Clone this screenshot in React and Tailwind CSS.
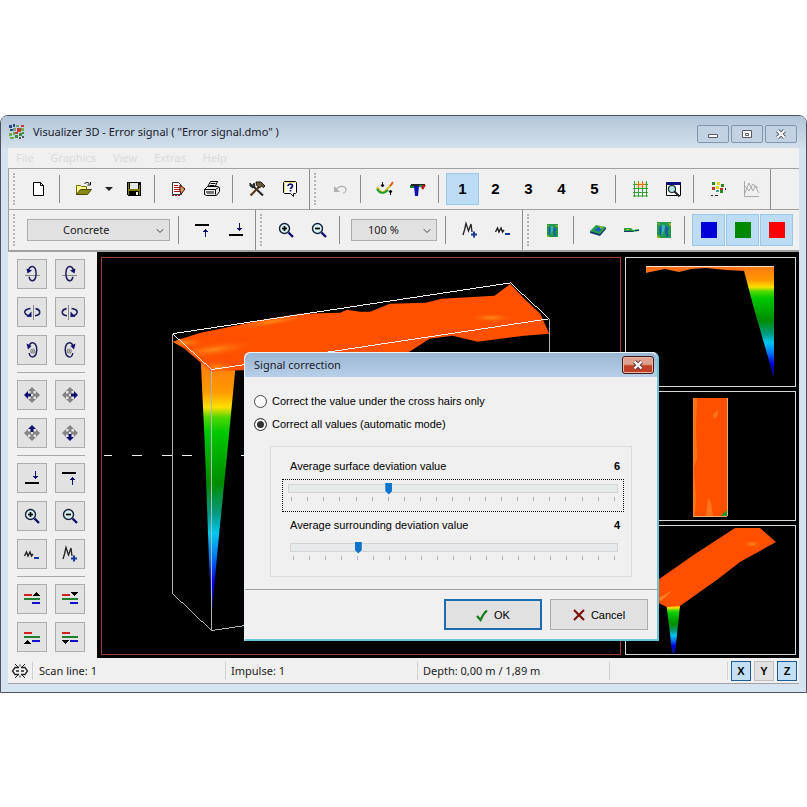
import { useState } from "react";
import { ChevronDown } from "lucide-react";

const NAVY = "#10106e";

function Svg({ w = 18, h = 18, crisp, children }) {
  return (
    <svg
      width={w}
      height={h}
      viewBox={`0 0 ${w} ${h}`}
      fill="none"
      shapeRendering={crisp ? "crispEdges" : "auto"}
      aria-hidden="true"
    >
      {children}
    </svg>
  );
}

/* ---------- toolbar icons ---------- */

const LogoIcon = () => (
  <Svg w={16} h={16} crisp>
    <path fill="#2b4a86" d="M0 1h3v3H0zM4 0h2v3H4zM1 5h3v2H1z" />
    <path fill="#7a9a7a" d="M7 1h3v2H7zM4 4h3v3H4z" />
    <path fill="#c23b2e" d="M8 4h4v4H8zM12 1h3v2h-3zM6 8h3v2H6z" />
    <path fill="#6fae4a" d="M12 4h3v3h-3zM0 9h3v3H0zM4 8h2v3H4zM1 13h4v2H1z" />
    <path fill="#3c8a3c" d="M10 9h3v3h-3zM6 11h3v3H6zM13 8h2v2h-2z" />
    <path fill="#555" d="M13 12h2v2h-2zM10 13h2v2h-2z" />
  </Svg>
);

const NewIcon = () => (
  <Svg>
    <path d="M3.500 2.500h7l3 3v10h-10z" fill="#fff" stroke="#000" />
    <path d="M10.500 2.500v3h3" stroke="#000" />
  </Svg>
);

const OpenIcon = () => (
  <Svg>
    <path d="M1.500 14.500v-9h4l1 1h5v3" fill="#ffff9a" stroke="#6b6b00" />
    <path d="M1.500 14.500l4-5h11l-4 5z" fill="#8a8a10" stroke="#4a4a00" />
    <path d="M9.500 4c1-2 4-2 5 0M15.500 2v3h-3" stroke="#000" />
  </Svg>
);

const SaveIcon = () => (
  <Svg crisp>
    <path d="M2 2h14v14H3l-1-1z" fill="#000" />
    <path d="M3 3h1v12H3zM14 5h1v10h-1z" fill="#7c7c00" />
    <path d="M5 3h8v6H5z" fill="#e4e4e4" />
    <path d="M3 9h12v2H3z" fill="#7c7c00" />
    <path d="M5 11h8v5H5z" fill="#000" />
    <path d="M11 12h2v3h-2z" fill="#fff" />
  </Svg>
);

const ReportIcon = () => (
  <Svg>
    <path d="M2.500 2.500h6l3 3v9h-9z" fill="#fff" stroke="#333" />
    <path d="M4 5.500h4M4 7.500h6M4 9.500h6M4 11.500h6" stroke="#b01818" />
    <path d="M2 15.500h8" stroke="#b01818" strokeDasharray="2 1" />
    <path d="M10 5l5 4-4 5-1-3z" fill="#d4a060" stroke="#400" />
  </Svg>
);

const PrintIcon = () => (
  <Svg>
    <path d="M4.500 7l3-5.500h7L12 7z" fill="#fff" stroke="#000" />
    <path d="M7.500 3.500h5M6.500 5.500h5" stroke="#000" />
    <path d="M1.500 9.500l3-3h10l2 1v4l-3 4h-10l-2-1z" fill="#ececec" stroke="#000" />
    <path d="M1.500 9.500h11l3-2M12.500 9.500v5M3 12h8" stroke="#000" />
    <path d="M4 13.500h7" stroke="#777" />
  </Svg>
);

const ToolsIcon = () => (
  <Svg>
    <path d="M5.500 6.500l9.500 9" stroke="#222" strokeWidth="2" />
    <path d="M12 6l-9.500 9.500" stroke="#5a3a1a" strokeWidth="2.200" />
    <path d="M8 2h5l4 4-1.500 1.500-2-1.500-2 2-3-3z" fill="#6a5a3a" stroke="#111" />
    <path d="M2 3v3l3 2 2-2-1-3-1 2H3.500z" fill="#333" stroke="#222" />
  </Svg>
);

const HelpIcon = () => (
  <Svg>
    <path d="M3.500 1.500h11l1 1v10l-1 1h-2v3l-3-3h-6l-1-1v-10z" fill="#fff" stroke="#000" />
    <path d="M4 2.500h10M3.500 3v9" stroke="#f3e36a" />
    <path d="M7 6c0-2.500 4.500-2.500 4.500 0 0 1.500-2 1.500-2 3M9.500 10v1.500" stroke="#10106e" strokeWidth="1.700" />
  </Svg>
);

const UndoIcon = () => (
  <Svg>
    <path d="M5 9.500c3-4 9-4 10-.5.5 2-1 4-3 4" stroke="#b0b0b0" strokeWidth="1.200" />
    <path d="M3 6v6h6z" fill="#b0b0b0" />
  </Svg>
);

const CorrectIcon = () => (
  <Svg w={20}>
    <path d="M2 7c3 6 7 7 10 2l6-6" stroke="#d8c020" strokeWidth="2" />
    <path d="M2 9c3 5 7 5 11 1" stroke="#1e9a2a" strokeWidth="2" />
    <path d="M15 6l3-4" stroke="#e05020" strokeWidth="1.500" />
    <path d="M7.500 2v4M6 5l1.500 2L9 5zM15.500 15v-4M14 12l1.500-2 1.500 2z" stroke="#000" fill="#000" />
  </Svg>
);

const SignalIcon = () => (
  <Svg>
    <path d="M1 5h5v3H1z" fill="#157a3a" />
    <path d="M2 4h14v2H2z" fill="#222" />
    <path d="M5 6h5l-1 10H6z" fill="#1010b0" />
    <path d="M10 5h7l-3 5z" fill="#c01818" />
    <path d="M10 5h3v2h-3z" fill="#1b9b3c" />
  </Svg>
);

const GridIcon = () => (
  <Svg>
    <path d="M5 2h10v6H5z" fill="#ffe0b0" />
    <path d="M2 4.500h15M2 8.500h15M2 12.500h15M2 16h15M3.500 1v16M7.500 1v16M11.500 1v16M15.500 1v16" stroke="#35a035" />
    <path d="M6 4.500h8M7.500 2v5M11.500 2v5" stroke="#f07020" />
  </Svg>
);

const PreviewIcon = () => (
  <Svg>
    <path d="M2.500 3.500h14v12h-14z" fill="#fff" stroke="#000" />
    <path d="M2 2h15v3H2z" fill="#10107a" />
    <circle cx="8" cy="9" r="3.500" fill="#aee6e6" stroke="#222" strokeWidth="1.200" />
    <path d="M10.500 11.500l5 5" stroke="#222" strokeWidth="2" />
  </Svg>
);

const PointsIcon = () => (
  <Svg crisp>
    <path fill="#2a8a20" d="M3 2h3v3H3zM12 4h3v3h-3zM11 10h3v3h-3z" />
    <path fill="#e0d020" d="M8 2h3v3H8zM7 6h3v3H7z" />
    <path fill="#c03020" d="M3 7h3v3H3zM11 8h3v2h-3z" />
    <path fill="#40a0a0" d="M7 10h3v2H7z" />
    <path fill="#222" d="M2 15h2v1H2zM6 15h3v1H6zM16 8h1v2h-1z" />
  </Svg>
);

const CurveIcon = () => (
  <Svg>
    <path d="M2.500 1v15.500H17" stroke="#aaa" />
    <path d="M3 13l4-10 4 8 2-5 4 7M3 6l4 5 4-7 5 4" stroke="#aaa" />
  </Svg>
);

const LineUpIcon = () => (
  <Svg crisp>
    <path d="M1 3h14v2H1z" fill="#000" />
    <path d="M11 8h1v8h-1zM10 9h3v1h-3zM9 10h5v1H9z" fill={NAVY} />
  </Svg>
);

const LineDownIcon = () => (
  <Svg crisp>
    <path d="M2 13h14v2H2z" fill="#000" />
    <path d="M12 2h1v8h-1zM11 8h3v1h-3zM10 7h5v1h-5z" fill={NAVY} />
  </Svg>
);

const ZoomIcon = ({ plus }) => (
  <Svg>
    <circle cx="7.500" cy="7.500" r="5" fill="#d6f0ee" stroke="#16203a" strokeWidth="1.400" />
    <path d="M5 7.500h5" stroke="#000" strokeWidth="1.700" />
    {plus && <path d="M7.500 5v5" stroke="#000" strokeWidth="1.700" />}
    <path d="M11.500 11.500l4.500 4.500" stroke={NAVY} strokeWidth="2.400" />
  </Svg>
);

const AmpUpIcon = () => (
  <Svg>
    <path d="M2 14l1.500-5L5 2.500 7.500 10l2.500-7 1 8" stroke="#222" strokeWidth="1.300" />
    <path d="M10 13.500h6M13 10.500v6" stroke="#1a3a9a" strokeWidth="2" />
  </Svg>
);

const AmpDownIcon = () => (
  <Svg>
    <path d="M1.500 11l2-4 1.500 4 2-4 1.500 4 1.500-2" stroke="#222" strokeWidth="1.400" />
    <path d="M11 13h5" stroke="#1a3a9a" strokeWidth="2" />
  </Svg>
);

const MapIcon = ({ size = 12 }) => (
  <svg width={size} height={size + 2} viewBox="0 0 12 14" preserveAspectRatio="none" aria-hidden="true">
    <path d="M0 0h12v14H0z" fill="#1f9a4a" />
    <path d="M2 5l2-3 1 4-2 6-1-2zM7 3l3 2-1 4 1 4H8L7 8z" fill="#1a5ab0" />
    <path d="M4 2l3 1-1 5-2 4z" fill="#38b8a8" />
    <path d="M9 1h3v3zM0 11l3 3H0zM0 1h2v2z" fill="#b0b020" />
  </svg>
);

const SurfaceIcon = () => (
  <Svg>
    <path d="M1 10l6-6 10 2-6 8z" fill="#2aa040" />
    <path d="M1 10l10 3v2L1 12zM11 13l6-7v2l-6 7z" fill="#123a70" />
    <path d="M5 9l4-3 4 1-3 4z" fill="#1a60c0" />
    <path d="M10 5l4 1-2 2z" fill="#b0c020" />
  </Svg>
);

const SideIcon = () => (
  <Svg>
    <path d="M2 7h7l2 2 6-1v2l-6 1H2z" fill="#2aa040" />
    <path d="M2 10h9v1H2zM13 9h4v1h-4z" fill="#123a70" />
    <path d="M4 8h3v1H4z" fill="#b0c020" />
  </Svg>
);

/* ---------- side panel icons ---------- */

const RotateXIcon = ({ mirror }) => (
  <svg width="20" height="20" viewBox="0 0 20 20" fill="none" className={mirror ? "-scale-x-100" : ""} aria-hidden="true">
    <path d="M3 11.500h15" stroke="#888" />
    <path d="M6.500 6C8 1.500 12.500 1 13.800 6.500c1 4.500-.3 10-3.300 10.300-2 .2-3-2-3.500-4" stroke="#20205e" strokeWidth="1.500" />
    <path d="M4.500 4.500L10 6.500l-4.500 3z" fill={NAVY} />
  </svg>
);

const RotateYIcon = ({ mirror }) => (
  <svg width="20" height="20" viewBox="0 0 20 20" fill="none" className={mirror ? "-scale-x-100" : ""} aria-hidden="true">
    <path d="M11.500 3v15" stroke="#888" />
    <path d="M8.500 6.500C5 6.800 2.500 8.300 2.800 10.500c.2 1.500 1.500 2.300 3.200 3M13 13.800c3-.5 5-2 4.700-4-.3-1.800-2-2.800-4.200-3.200" stroke="#20205e" strokeWidth="1.600" />
    <path d="M4.500 14.800L9.500 15V9.500z" fill={NAVY} />
  </svg>
);

const RotateZIcon = ({ mirror }) => (
  <svg width="20" height="20" viewBox="0 0 20 20" fill="none" className={mirror ? "-scale-x-100" : ""} aria-hidden="true">
    <path d="M7 6C8.500 1.500 13 1.500 14.500 7c1 4.500-.5 9.800-3.800 10-2 .1-3.200-2-3.500-4" stroke="#20205e" strokeWidth="1.500" />
    <path d="M4.500 3.500L9.500 6 6 9.500z" fill={NAVY} />
    <circle cx="10.800" cy="11" r="2" stroke="#888" strokeWidth="1.200" />
    <circle cx="10.800" cy="11" r="0.800" fill="#444" />
  </svg>
);

const arrows = {
  left: "M2 10l4-4v2.500h3v3H6V14z",
  right: "M18 10l-4-4v2.500h-3v3h3V14z",
  up: "M10 2l4 4h-2.500v3h-3V6H6z",
  down: "M10 18l4-4h-2.500v-3h-3v3H6z",
};

const MoveIcon = ({ dir }) => (
  <Svg w={20} h={20}>
    {Object.keys(arrows).map((key) => (
      <path key={key} d={arrows[key]} fill={key === dir ? NAVY : "#848484"} />
    ))}
  </Svg>
);

const LayerIcon = ({ arrow }) => (
  <Svg w={20} h={18} crisp>
    <path d="M2 4h8v2H2z" fill="#d02020" />
    <path d="M2 8h16v2H2z" fill="#208030" />
    <path d="M10 12h8v2h-8z" fill="#1010d0" />
    <path d={arrow} fill="#000" />
  </Svg>
);

const LinkIcon = () => (
  <Svg>
    <path d="M8 5.500H4L1.500 9 4 12.500h4M10 5.500h4L16.500 9 14 12.500h-4M5 9h3M10 9h3" stroke="#222" strokeWidth="1.300" />
    <path d="M4 2l3 3M9 2.500v2M14 2l-3 3M4 16l3-3M9 15.500v-2M14 16l-3-3" stroke="#222" />
  </Svg>
);

/* ---------- toolbar parts ---------- */

function Tool({ label, active, children }) {
  return (
    <button
      aria-label={label}
      className={
        active
          ? "flex h-8 w-[33px] shrink-0 items-center justify-center border border-[#9cc8e8] bg-[#bcdcf4]"
          : "flex h-8 w-[33px] shrink-0 items-center justify-center"
      }
    >
      {children}
    </button>
  );
}

const Divider = () => <span className="ml-1 mr-[7px] h-7 w-px shrink-0 bg-[#8c8c8c]" />;

function Group({ last, children }) {
  return (
    <div
      className={
        last
          ? "flex h-full min-w-0 flex-1 items-center"
          : "flex h-full shrink-0 items-center border-r border-[#8c8c8c] pr-[3px]"
      }
    >
      <span className="ml-1 mr-[6px] h-8 w-[3px] shrink-0 border-l-2 border-dotted border-[#b4b4b4]" />
      {children}
    </div>
  );
}

function Combo({ label, value, className, selectClass }) {
  return (
    <span className={`relative block h-[22px] shrink-0 ${className}`}>
      <select
        aria-label={label}
        className={`block h-full w-full appearance-none border border-[#adadad] bg-[#e1e1e1] text-[11px] leading-4 text-[#222] ${selectClass}`}
      >
        <option>{value}</option>
      </select>
      <ChevronDown className="pointer-events-none absolute right-1 top-[6px] size-3 text-[#444]" strokeWidth={2} />
    </span>
  );
}

function SideButton({ label, children }) {
  return (
    <button aria-label={label} className="flex size-[30px] items-center justify-center border border-[#adadad] bg-[#e2e2e2]">
      {children}
    </button>
  );
}

const SideGroup = ({ children }) => <div className="grid grid-cols-[30px_30px] gap-2">{children}</div>;

const SideRule = () => <hr className="my-[7px] mr-3 border-t border-[#a8a8a8]" />;

function Toolbars() {
  return (
    <div className="border-t border-l border-[#a0a0a0]">
      <div className="flex h-[41px] items-center border-b border-[#a0a0a0]">
        <Group>
          <Tool label="New"><NewIcon /></Tool>
          <Divider />
          <Tool label="Open"><OpenIcon /></Tool>
          <button aria-label="Recent files" className="flex h-8 w-[17px] items-center justify-center">
            <Svg w={8} h={5}><path d="M0 0h8L4 4z" fill="#222" /></Svg>
          </button>
          <Tool label="Save"><SaveIcon /></Tool>
          <Divider />
          <Tool label="Report"><ReportIcon /></Tool>
          <Tool label="Print"><PrintIcon /></Tool>
          <Divider />
          <Tool label="Settings"><ToolsIcon /></Tool>
          <Tool label="Help"><HelpIcon /></Tool>
        </Group>
        <Group>
          <Tool label="Undo"><UndoIcon /></Tool>
          <Divider />
          <Tool label="Correct signal"><CorrectIcon /></Tool>
          <Tool label="Error signal"><SignalIcon /></Tool>
          <Divider />
          <div className="flex font-['Liberation_Sans',sans-serif] text-[15px] font-bold text-black">
            <Tool active>1</Tool>
            <Tool>2</Tool>
            <Tool>3</Tool>
            <Tool>4</Tool>
            <Tool>5</Tool>
          </div>
          <Divider />
          <Tool label="Grid"><GridIcon /></Tool>
          <Tool label="Preview"><PreviewIcon /></Tool>
          <Divider />
          <Tool label="Points"><PointsIcon /></Tool>
          <Tool label="Curves"><CurveIcon /></Tool>
        </Group>
      </div>
      <div className="flex h-[42px] items-center border-b-2 border-[#a0a0a0]">
        <Group>
          <Combo label="Soil type" value="Concrete" className="ml-[5px] mr-1 w-[143px]" selectClass="pl-[35px]" />
          <Divider />
          <Tool label="Raise surface"><LineUpIcon /></Tool>
          <Tool label="Lower surface"><LineDownIcon /></Tool>
        </Group>
        <Group>
          <Tool label="Zoom in"><ZoomIcon plus /></Tool>
          <Tool label="Zoom out"><ZoomIcon /></Tool>
          <Divider />
          <Combo label="Zoom" value="100 %" className="ml-1 mr-1 w-[86px]" selectClass="pl-4" />
          <Divider />
          <Tool label="Increase amplitude"><AmpUpIcon /></Tool>
          <Tool label="Decrease amplitude"><AmpDownIcon /></Tool>
        </Group>
        <Group last>
          <Tool label="Top view"><MapIcon size={11} /></Tool>
          <Divider />
          <Tool label="Perspective"><SurfaceIcon /></Tool>
          <Tool label="Side view"><SideIcon /></Tool>
          <Tool label="Map view"><MapIcon size={14} /></Tool>
          <Divider />
          <div className="flex gap-px">
            <Tool label="Blue" active><span className="size-4 bg-[#0000d8]" /></Tool>
            <Tool label="Green" active><span className="size-4 bg-[#008800]" /></Tool>
            <Tool label="Red" active><span className="size-4 bg-[#ff0000]" /></Tool>
          </div>
        </Group>
      </div>
    </div>
  );
}

function SidePanel() {
  return (
    <div className="w-[89px] shrink-0 pb-[5px] pl-[9px] pt-[7px]">
      <SideGroup>
        <SideButton label="Rotate X left"><RotateXIcon /></SideButton>
        <SideButton label="Rotate X right"><RotateXIcon mirror /></SideButton>
        <SideButton label="Rotate Y left"><RotateYIcon /></SideButton>
        <SideButton label="Rotate Y right"><RotateYIcon mirror /></SideButton>
        <SideButton label="Rotate Z left"><RotateZIcon /></SideButton>
        <SideButton label="Rotate Z right"><RotateZIcon mirror /></SideButton>
      </SideGroup>
      <SideRule />
      <SideGroup>
        <SideButton label="Move left"><MoveIcon dir="left" /></SideButton>
        <SideButton label="Move right"><MoveIcon dir="right" /></SideButton>
        <SideButton label="Move up"><MoveIcon dir="up" /></SideButton>
        <SideButton label="Move down"><MoveIcon dir="down" /></SideButton>
      </SideGroup>
      <SideRule />
      <SideGroup>
        <SideButton label="Lower surface"><LineDownIcon /></SideButton>
        <SideButton label="Raise surface"><LineUpIcon /></SideButton>
        <SideButton label="Zoom in"><ZoomIcon plus /></SideButton>
        <SideButton label="Zoom out"><ZoomIcon /></SideButton>
        <SideButton label="Decrease amplitude"><AmpDownIcon /></SideButton>
        <SideButton label="Increase amplitude"><AmpUpIcon /></SideButton>
      </SideGroup>
      <SideRule />
      <SideGroup>
        <SideButton label="Red layer up"><LayerIcon arrow="M14 2h1v1h1v1h1v1h1v1h-7V5h1V4h1V3h1z" /></SideButton>
        <SideButton label="Red layer down"><LayerIcon arrow="M11 2h7v1h-1v1h-1v1h-1v1h-1V5h-1V4h-1V3h-1z" /></SideButton>
        <SideButton label="Blue layer up"><LayerIcon arrow="M5 12h1v1h1v1h1v1h1v1H2v-1h1v-1h1v-1h1z" /></SideButton>
        <SideButton label="Blue layer down"><LayerIcon arrow="M2 12h7v1H8v1H7v1H6v1H5v-1H4v-1H3v-1H2z" /></SideButton>
      </SideGroup>
    </div>
  );
}

/* ---------- 3D views ---------- */

function DepthGradient({ id, y1, y2 }) {
  return (
    <linearGradient id={id} gradientUnits="userSpaceOnUse" x1="0" x2="0" y1={y1} y2={y2}>
      <stop offset="0" stopColor="#ff7a10" />
      <stop offset="0.12" stopColor="#ff9a00" />
      <stop offset="0.18" stopColor="#ffe000" />
      <stop offset="0.22" stopColor="#50d800" />
      <stop offset="0.28" stopColor="#00c800" />
      <stop offset="0.48" stopColor="#008c00" />
      <stop offset="0.6" stopColor="#009a80" />
      <stop offset="0.68" stopColor="#00c8f0" />
      <stop offset="0.78" stopColor="#0070f0" />
      <stop offset="0.87" stopColor="#0000e0" />
      <stop offset="1" stopColor="#101080" />
    </linearGradient>
  );
}

const SURFACE =
  "M71 84l9-3 19-6 25-5 37-8 38-6 40-1 7-3 13 2h10l20-8 36-1 16-4 53-3 16-12 14 15 16 15 9 20-25 2-47 6-25-6-23 3-22 14-28 13-146 5-24 1-10-9-16-14z";

function MainView() {
  return (
    <svg viewBox="0 0 520 397" preserveAspectRatio="xMinYMin meet" className="h-full w-full" aria-label="3D view">
      <defs>
        <DepthGradient id="depthMain" y1="104" y2="358" />
        <radialGradient id="glow">
          <stop offset="0" stopColor="#ff8c18" />
          <stop offset="1" stopColor="#ff5000" stopOpacity="0" />
        </radialGradient>
        <clipPath id="surfaceClip"><path d={SURFACE} /></clipPath>
      </defs>
      <path d="M99 100l35 10-8 83-9 90-7 75-3-66-4-109z" fill="url(#depthMain)" />
      <path d={SURFACE} fill="#ff5000" />
      <g clipPath="url(#surfaceClip)" fill="url(#glow)">
        <ellipse cx="112" cy="92" rx="46" ry="8" transform="rotate(-8 112 92)" />
        <ellipse cx="82" cy="85" rx="26" ry="6" />
        <ellipse cx="170" cy="64" rx="44" ry="5" transform="rotate(-9 170 64)" />
        <ellipse cx="391" cy="60" rx="24" ry="5" />
        <ellipse cx="116" cy="110" rx="22" ry="8" />
      </g>
      <g fill="none" stroke="#f4f4f4" shapeRendering="crispEdges">
        <path d="M71 76v261l39 37 339-51V61M110 112v262" stroke="#b4b4b4" />
        <path d="M71 76L410 25l39 36-339 51z" />
        <path d="M2 198.500h8M30 198.500h10M60 198.500h10M80 198.500h10M140 198.500h8" />
      </g>
    </svg>
  );
}

function ProfileView() {
  return (
    <svg viewBox="0 0 169 128" className="h-full w-full" aria-label="Side view">
      <defs><DepthGradient id="depthSide" y1="9" y2="120" /></defs>
      <path d="M20 8h100v5l-20-1-20-2-15 1-12 3-14-3-15 3-4 1z" fill="#ff7018" />
      <path d="M117 9h31v111L127 47z" fill="url(#depthSide)" />
      <path d="M20 8.500h128" stroke="#ffe0c8" />
    </svg>
  );
}

function TopView() {
  return (
    <svg viewBox="0 0 169 128" className="h-full w-full" aria-label="Top view">
      <path d="M67 6h34v118H67z" fill="#ff5000" />
      <path d="M67 6h4l-1 30 1 30-3 10 2 30-1 18h-2zM87 22l5-4v5l-4 4zM82 106l3 4 2 14h-7z" fill="#ff7418" />
      <path d="M95 124l6-6v6z" fill="#209a30" />
      <path d="M67 124.500h34M101.500 6v118" stroke="#e8b070" />
    </svg>
  );
}

function PerspectiveView() {
  return (
    <svg viewBox="0 0 169 128" className="h-full w-full" aria-label="Perspective view">
      <defs>
        <DepthGradient id="depthPersp" y1="72" y2="127" />
        <radialGradient id="glowPersp">
          <stop offset="0" stopColor="#ff8c18" />
          <stop offset="1" stopColor="#ff5000" stopOpacity="0" />
        </radialGradient>
      </defs>
      <path d="M40 76l14 4-4 38-1 9h-3l-2-20z" fill="url(#depthPersp)" />
      <path d="M109 2h25l16 14-36 20-22 17-38 27-13 1-15-7V58l43-30z" fill="#ff5000" />
      <ellipse cx="126" cy="18" rx="10" ry="4" fill="url(#glowPersp)" />
      <path d="M33 72l14-8-12 11z" fill="#ff8420" />
    </svg>
  );
}

function Views() {
  return (
    <div className="flex min-w-0 flex-1 gap-1 bg-black pb-[3px] pl-1 pr-[3px] pt-[5px]">
      <div className="min-w-0 flex-1 border border-[#a03c34]">
        <MainView />
      </div>
      <div className="flex w-[171px] shrink-0 flex-col gap-1">
        <div className="min-h-0 flex-1 border border-[#d8d8d8]"><ProfileView /></div>
        <div className="min-h-0 flex-1 border border-[#d8d8d8]"><TopView /></div>
        <div className="min-h-0 flex-1 border border-[#d8d8d8]"><PerspectiveView /></div>
      </div>
    </div>
  );
}

/* ---------- status bar ---------- */

function AxisToggle({ on, children }) {
  return (
    <button
      aria-pressed={!!on}
      className={
        on
          ? "flex size-5 items-center justify-center border border-[#1c5a94] bg-[#c4e0f6] font-['Liberation_Sans',sans-serif] text-[11px] font-bold text-black"
          : "flex size-5 items-center justify-center border border-[#c0c0c0] bg-[#e1e1e1] font-['Liberation_Sans',sans-serif] text-[11px] font-bold text-black"
      }
    >
      {children}
    </button>
  );
}

function StatusBar() {
  return (
    <div className="flex h-[26px] items-center border-b border-[#a0a0a0] bg-[#f0f0f0] text-[11px] leading-[18px] text-[#222]">
      <span className="flex w-6 justify-center"><LinkIcon /></span>
      <span className="w-[193px] border-l border-[#d0d0d0] pl-[6px]">Scan line: 1</span>
      <span className="w-48 border-l border-[#d0d0d0] pl-[5px]">Impulse: 1</span>
      <span className="w-48 border-l border-[#d0d0d0] pl-[5px]">Depth: 0,00 m / 1,89 m</span>
      <span className="h-[18px] flex-1 border-x border-[#d0d0d0]" />
      <span className="flex gap-[3px] pl-[3px] pr-[2px]">
        <AxisToggle on>X</AxisToggle>
        <AxisToggle>Y</AxisToggle>
        <AxisToggle on>Z</AxisToggle>
      </span>
    </div>
  );
}

/* ---------- dialog ---------- */

const TICKS = Array.from({ length: 21 }, (_, i) => i);

function Slider({ id, value, onChange }) {
  return (
    <div>
      <input
        id={id}
        type="range"
        min="0"
        max="20"
        value={value}
        onChange={(e) => onChange(Number(e.target.value))}
        className="block h-3 w-full appearance-none bg-transparent outline-none [&::-webkit-slider-runnable-track]:h-[9px] [&::-webkit-slider-runnable-track]:border [&::-webkit-slider-runnable-track]:border-[#d4d4d4] [&::-webkit-slider-runnable-track]:bg-[#e7eaea] [&::-webkit-slider-thumb]:-mt-[2px] [&::-webkit-slider-thumb]:h-3 [&::-webkit-slider-thumb]:w-[7px] [&::-webkit-slider-thumb]:appearance-none [&::-webkit-slider-thumb]:bg-[#0f74cc] [&::-webkit-slider-thumb]:[clip-path:polygon(0_0,100%_0,100%_70%,50%_100%,0_70%)]"
      />
      <div className="mt-[3px] flex justify-between px-[3px]">
        {TICKS.map((tick) => (
          <span key={tick} className="h-1 w-px bg-[#b4b4b4]" />
        ))}
      </div>
    </div>
  );
}

const radioClass =
  "size-[13px] shrink-0 appearance-none rounded-full border border-[#444] bg-white checked:bg-[#333] checked:shadow-[inset_0_0_0_2px_white]";

function CorrectionDialog() {
  const [surface, setSurface] = useState(6);
  const [surrounding, setSurrounding] = useState(4);

  return (
    <div
      role="dialog"
      aria-label="Signal correction"
      className="absolute left-[243px] top-[236px] w-[415px] rounded-t-md border border-b-2 border-r-2 border-[#e8f4fa] border-b-[#6cc4d8] border-r-[#6cc4d8] bg-[#f0f0f0] font-['Liberation_Sans',sans-serif] text-[11px] leading-4 text-black"
    >
      <div className="flex h-6 items-center justify-between rounded-t-md bg-linear-to-b from-[#9ab6d2] to-[#b8cfe8] pl-[9px] pr-[3px]">
        <h2 className="font-['Noto_Sans','Open_Sans',sans-serif] text-[11px] text-[#1a1a2a]">Signal correction</h2>
        <button
          aria-label="Close"
          className="flex h-[18px] w-8 items-center justify-center rounded-[3px] border border-[#401818] bg-linear-to-b from-[#e0a090] from-45% to-[#c04028] to-55% shadow-[inset_0_0_0_1px_#e8b8a8]"
        >
          <Svg w={12} h={10}>
            <path d="M2.500 1.500l7 7M9.500 1.500l-7 7" stroke="#5a3030" strokeWidth="4" />
            <path d="M2.500 1.500l7 7M9.500 1.500l-7 7" stroke="#fff" strokeWidth="2.400" />
          </Svg>
        </button>
      </div>

      <div className="flex flex-col gap-[7px] pl-[9px] pt-4">
        <label className="flex items-center gap-[5px]">
          <input type="radio" name="mode" className={radioClass} />
          Correct the value under the cross hairs only
        </label>
        <label className="flex items-center gap-[5px]">
          <input type="radio" name="mode" defaultChecked className={radioClass} />
          Correct all values (automatic mode)
        </label>
      </div>

      <div className="mx-[25px] mt-[14px] h-[131px] border border-[#dcdcdc] pt-[11px]">
        <div className="flex justify-between pl-[19px] pr-[11px]">
          <label htmlFor="surface">Average surface deviation value</label>
          <output className="font-bold">{surface}</output>
        </div>
        <div className="ml-[11px] mr-[7px] mt-[5px] h-[33px] border border-dotted border-black px-[5px] pt-[2px]">
          <Slider id="surface" value={surface} onChange={setSurface} />
        </div>
        <div className="mt-[5px] flex justify-between pl-[19px] pr-[11px]">
          <label htmlFor="surrounding">Average surrounding deviation value</label>
          <output className="font-bold">{surrounding}</output>
        </div>
        <div className="ml-[19px] mr-[13px] mt-2">
          <Slider id="surrounding" value={surrounding} onChange={setSurrounding} />
        </div>
      </div>

      <div className="mt-3 flex justify-end gap-2 border-t border-[#a0a0a0] py-[9px] pr-[9px]">
        <button className="flex h-[31px] w-[98px] items-center justify-center gap-[6px] border-2 border-[#1c6cae] bg-[#e1e1e1]">
          <Svg w={12} h={14}>
            <path d="M1 8l3.500 4C6 8.500 8 5 11 2.500" stroke="#1c7a1c" strokeWidth="2.200" />
          </Svg>
          OK
        </button>
        <button className="flex h-[31px] w-[98px] items-center justify-center gap-[6px] border border-[#adadad] bg-[#e1e1e1]">
          <Svg w={12} h={12}>
            <path d="M1 1l10 10M11 1L1 11" stroke="#7a1010" strokeWidth="2.200" />
          </Svg>
          Cancel
        </button>
      </div>
    </div>
  );
}

/* ---------- window ---------- */

const captionButton =
  "flex h-[18px] w-8 items-center justify-center rounded-[2px] border border-[#8095ae] bg-[#c3d2e2]";

function TitleBar() {
  return (
    <div className="flex h-8 items-center justify-between rounded-t-md bg-linear-to-b from-[#b2c5d8] to-[#d3e0ec] pl-2 pr-[9px]">
      <div className="flex items-center gap-2">
        <LogoIcon />
        <h1 className="text-[11px] text-[#1a1a2a]">Visualizer 3D - Error signal ( "Error signal.dmo" )</h1>
      </div>
      <div className="flex gap-[2px] pt-1">
        <button aria-label="Minimize" className={captionButton}>
          <Svg w={12} h={10}><path d="M1.500 5.500h9v3h-9z" fill="#fff" stroke="#505a68" /></Svg>
        </button>
        <button aria-label="Maximize" className={captionButton}>
          <Svg w={12} h={10}>
            <path d="M1.500 1.500h9v7h-9z" fill="#fff" stroke="#505a68" />
            <path d="M4.500 4.500h3v2h-3z" stroke="#505a68" />
          </Svg>
        </button>
        <button aria-label="Close" className={captionButton}>
          <Svg w={12} h={10}>
            <path d="M2.500 1.500l7 7M9.500 1.500l-7 7" stroke="#505a68" strokeWidth="4" />
            <path d="M2.500 1.500l7 7M9.500 1.500l-7 7" stroke="#fff" strokeWidth="2.200" />
          </Svg>
        </button>
      </div>
    </div>
  );
}

export default function App() {
  return (
    <div className="min-h-screen bg-white pt-[115px] font-['Noto_Sans','Open_Sans',sans-serif]">
      <div className="relative rounded-t-lg border border-[#4c5260] bg-[#d6e3f1]">
        <TitleBar />
        <div className="mx-[7px] mb-2 bg-[#f0f0f0]">
          <nav className="flex h-5 items-center gap-[17px] pl-2 text-[11px] leading-4 text-[#d8dadc]">
            <a href="#file">File</a>
            <a href="#graphics">Graphics</a>
            <a href="#view">View</a>
            <a href="#extras">Extras</a>
            <a href="#help">Help</a>
          </nav>
          <Toolbars />
          <div className="flex">
            <SidePanel />
            <Views />
          </div>
          <StatusBar />
        </div>
        <CorrectionDialog />
      </div>
    </div>
  );
}
